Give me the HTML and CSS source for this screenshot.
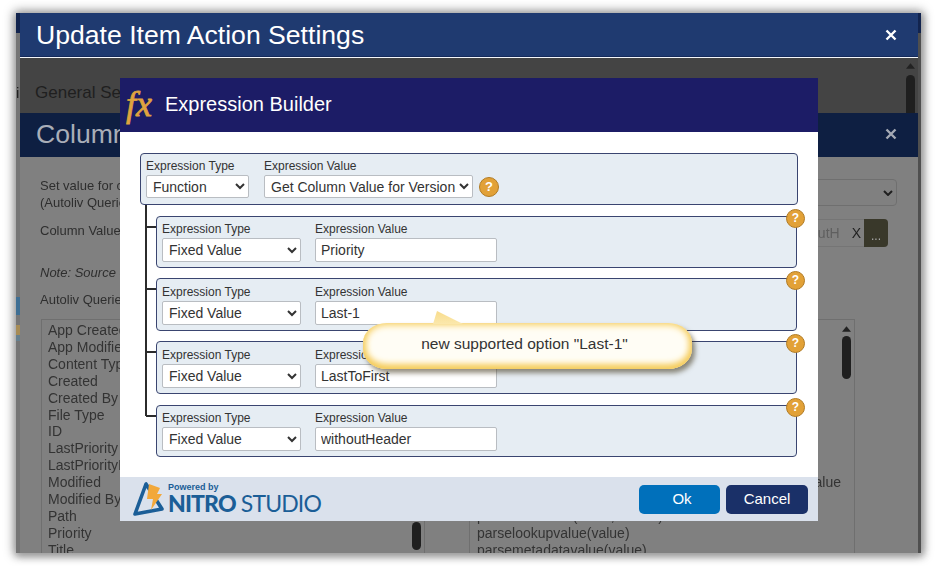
FILE: index.html
```html
<!DOCTYPE html>
<html lang="en">
<head>
<meta charset="utf-8">
<title>Expression Builder</title>
<link rel="stylesheet" href="styles.css">
</head>
<body>
<div class="shot">
  <div class="strip strip-left"></div>
  <main class="page">
    <header class="page-head">
      <h1>Update Item Action Settings</h1>
      <svg class="close" viewBox="0 0 12 12"><path d="M1.5 1.5 10.5 10.5M10.5 1.5 1.5 10.5"/></svg>
    </header>
    <section class="tabs">
      <span class="tab-cut">i</span>
      <span class="tab">General Settings</span>
      <div class="scroll-top">
        <svg class="arrow" viewBox="0 0 10 6"><path d="M5 0 10 6H0Z"/></svg>
        <div class="thumb"></div>
      </div>
    </section>
    <header class="column-head">
      <h2>Column Values</h2>
      <svg class="close dim" viewBox="0 0 12 12"><path d="M1.5 1.5 10.5 10.5M10.5 1.5 1.5 10.5"/></svg>
    </header>
    <section class="form">
      <div class="row row-set">
        <div class="row-label">Set value for column<br>(Autoliv Queries)</div>
        <div class="fake-select"><svg class="chev" viewBox="0 0 10 6"><path d="M1 1 5 5 9 1"/></svg></div>
      </div>
      <div class="row row-value">
        <div class="row-label">Column Value</div>
        <div class="fake-input"><span class="fake-text">withoutH</span><span class="fake-x">X</span><span class="fake-btn">...</span></div>
      </div>
      <div class="note">Note: Source column</div>
      <div class="row-label list-label">Autoliv Queries</div>
      <div class="lists">
        <div class="list">
          <div>App Created</div><div>App Modified</div><div>Content Type</div><div>Created</div><div>Created By</div><div>File Type</div><div>ID</div><div>LastPriority</div><div>LastPriorityId</div><div>Modified</div><div>Modified By</div><div>Path</div><div>Priority</div><div>Title</div>
          <div class="list-scroll"><div class="thumb thumb-left"></div></div>
        </div>
        <div class="list list-right">
          <div class="fn-end">value</div>
          <div>&nbsp;</div>
          <div>parsedatevalue(value, format)</div>
          <div>parselookupvalue(value)</div>
          <div>parsemetadatavalue(value)</div>
          <div class="list-scroll"><svg class="arrow" viewBox="0 0 10 6"><path d="M5 0 10 6H0Z"/></svg><div class="thumb thumb-right"></div></div>
        </div>
      </div>
    </section>
  </main>
  <div class="strip strip-right"></div>

  <div class="modal">
    <header class="modal-head">
      <span class="fx">fx</span>
      <span class="modal-title">Expression Builder</span>
    </header>
    <div class="modal-body">
      <div class="expr expr-root">
        <div class="field">
          <label>Expression Type</label>
          <select class="sel-fn"><option>Function</option></select>
        </div>
        <div class="field">
          <label>Expression Value</label>
          <select class="sel-ver"><option>Get Column Value for Version</option></select>
        </div>
        <span class="help help-root">?</span>
      </div>
      <div class="tree">
        <div class="expr expr-child">
          <div class="field"><label>Expression Type</label><select class="sel-type"><option>Fixed Value</option></select></div>
          <div class="field"><label>Expression Value</label><input class="val" value="Priority"></div>
          <span class="help help-child">?</span>
        </div>
        <div class="expr expr-child">
          <div class="field"><label>Expression Type</label><select class="sel-type"><option>Fixed Value</option></select></div>
          <div class="field"><label>Expression Value</label><input class="val" value="Last-1"></div>
          <span class="help help-child">?</span>
        </div>
        <div class="expr expr-child">
          <div class="field"><label>Expression Type</label><select class="sel-type"><option>Fixed Value</option></select></div>
          <div class="field"><label>Expression Value</label><input class="val" value="LastToFirst"></div>
          <span class="help help-child">?</span>
        </div>
        <div class="expr expr-child">
          <div class="field"><label>Expression Type</label><select class="sel-type"><option>Fixed Value</option></select></div>
          <div class="field"><label>Expression Value</label><input class="val" value="withoutHeader"></div>
          <span class="help help-child">?</span>
        </div>
      </div>
    </div>
    <footer class="modal-foot">
      <div class="logo">
        <svg class="logo-mark" viewBox="0 0 32 36">
          <path class="logo-tri" d="M13 3 2 33 29 28 13 3Z"/>
          <path class="logo-bolt" d="M16 3 27 7 24 13 29 13 18 29 20 18 14 18Z"/>
        </svg>
        <div class="logo-text">
          <span class="logo-small">Powered by</span>
          <span class="logo-big"><b>NITRO</b> STUDIO</span>
        </div>
      </div>
      <div class="actions">
        <button class="btn btn-ok">Ok</button>
        <button class="btn btn-cancel">Cancel</button>
      </div>
    </footer>
  </div>

  <div class="callout">
    <svg class="callout-tip" viewBox="0 0 32 14"><defs><linearGradient id="tip" x1="0" y1="0" x2="0" y2="1"><stop offset="0" stop-color="#f8dc8c"/><stop offset="1" stop-color="#fbe8ac"/></linearGradient></defs><path d="M1 14 5 1 31 14Z" fill="url(#tip)"/></svg>
    new supported option "Last-1"
  </div>
</div>
</body>
</html>
```
FILE: styles.css
```css
* { box-sizing: border-box; }
html, body { margin: 0; height: 100%; background: #fff; overflow: hidden; }
body { font-family: "Liberation Sans", Arial, sans-serif; padding: 13px 0 0 16px; }

.shot {
  position: relative;
  width: 905px;
  height: 540px;
  display: flex;
  background: #808080;
  box-shadow: 0 0 10px 2px #9a9a9a, 1px 2px 7px 1px #a5a5a5;
  filter: blur(0.4px);
}
.strip { flex: none; }
.strip-left {
  width: 4px;
  background: linear-gradient(to bottom, #12244e 0 20px, #757575 20px 284px, #3f6f94 284px 302px, #777 302px 312px, #a78c56 312px 322px, #66808f 322px 328px, #757575 328px);
}
.strip-right {
  width: 3px;
  background: linear-gradient(to bottom, #12244e 0 20px, #4f4f4f 20px);
}
.page { flex: none; width: 898px; display: flex; flex-direction: column; }

.page-head {
  height: 45px;
  flex: none;
  display: flex;
  align-items: center;
  justify-content: space-between;
  padding: 0 21px 0 16px;
  background: #1f3a70;
  border-bottom: 1px solid #f4f6f9;
  box-shadow: inset 0 -1px 0 #14295a;
}
.page-head h1 { margin: 0; font-size: 26.6px; font-weight: 400; color: #fff; }
.close { width: 12px; height: 12px; fill: none; stroke: #fff; stroke-width: 2.4; }
.close.dim { stroke: #a4a9b4; }

.tabs {
  height: 55px;
  flex: none;
  display: flex;
  align-items: center;
  background: #444;
  padding-left: 15px;
  position: relative;
  color: #222;
}
.tab { font-size: 17px; color: #1f1f1f; margin-top: 14px; }
.tab-cut { position: absolute; left: -4px; top: 26px; font-size: 15px; }
.scroll-top {
  margin-left: auto;
  margin-right: 3px;
  width: 9px;
  align-self: stretch;
  display: flex;
  flex-direction: column;
  align-items: center;
  padding-top: 5px;
  gap: 6px;
}
.arrow { width: 9px; height: 6px; fill: #222; flex: none; }
.thumb { width: 9px; background: #1f1f1f; border-radius: 5px; }
.scroll-top .thumb { flex: 1; border-radius: 5px 5px 0 0; }

.column-head {
  height: 44px;
  flex: none;
  display: flex;
  align-items: center;
  justify-content: space-between;
  padding: 0 21px 2px 16px;
  background: #0e1f42;
}
.column-head h2 { margin: 0; font-size: 26.6px; font-weight: 400; color: #a9aeb8; }

.form { flex: 1; min-height: 0; overflow: hidden; padding: 20px 0 0 20px; color: #2e2e2e; font-size: 13px; }
.row { display: flex; align-items: flex-start; }
.row-label { line-height: 17px; width: 190px; flex: none; }
.fake-select {
  margin-left: auto;
  margin-right: 21px;
  margin-top: 2px;
  width: 600px;
  height: 27px;
  border: 1px solid #6f6f6f;
  border-radius: 4px;
  display: flex;
  align-items: center;
  justify-content: flex-end;
  padding-right: 3px;
}
.chev { width: 10px; height: 6px; fill: none; stroke: #1f1f1f; stroke-width: 2; }
.row-value { margin-top: 8px; }
.row-value .row-label { padding-top: 3px; }
.fake-input {
  margin-left: auto;
  margin-right: 30px;
  width: 600px;
  height: 28px;
  border: 1px solid #757575;
  border-right: 0;
  border-radius: 4px;
  display: flex;
  align-items: center;
  justify-content: flex-end;
  font-size: 14px;
}
.fake-text { color: #5f5f5f; margin-right: 12px; }
.fake-x { color: #222; margin-right: 3px; }
.fake-btn {
  width: 24px;
  height: 28px;
  background: #39382a;
  color: #aaa;
  border-radius: 0 4px 4px 0;
  text-align: center;
  font-size: 12px;
  line-height: 34px;
}
.note { font-style: italic; margin-top: 17px; line-height: 17px; }
.list-label { margin-top: 10px; }
.lists { display: flex; margin: 11px 0 0 1px; gap: 44px; }
.list {
  position: relative;
  width: 384px;
  height: 260px;
  flex: none;
  border: 1px solid #6f6f6f;
  padding: 2px 0 0 6px;
  font-size: 14px;
  line-height: 16.9px;
  color: #333;
}
.list-right { width: 386px; padding-top: 154px; padding-left: 7px; }
.fn-end { width: 364px; text-align: right; overflow: hidden; white-space: nowrap; }
.list-scroll {
  position: absolute;
  top: 2px;
  right: 3px;
  width: 9px;
  display: flex;
  flex-direction: column;
  align-items: center;
  gap: 4px;
}
.thumb-left { margin-top: 200px; height: 28px; }
.list-right .list-scroll { top: 6px; }
.thumb-right { height: 43px; }

.modal {
  position: absolute;
  left: 104px;
  top: 65px;
  width: 698px;
  height: 443px;
  display: flex;
  flex-direction: column;
  background: #fff;
}
.modal-head {
  height: 54px;
  flex: none;
  display: flex;
  align-items: center;
  background: #1c1c66;
  color: #fff;
  padding: 0 0 2px 6px;
}
.fx {
  font-family: "Liberation Serif", "Times New Roman", serif;
  font-style: italic;
  font-weight: 400;
  font-size: 36px;
  -webkit-text-stroke: 0.8px #dfa33f;
  color: #dfa33f;
  width: 39px;
  margin-top: -1px;
}
.modal-title { font-size: 20px; }
.modal-body { flex: 1; padding: 21px 20px 0; }
.expr {
  position: relative;
  display: flex;
  gap: 15px;
  background: #e6edf3;
  border: 1.5px solid #3a4570;
  border-radius: 4px;
  padding: 5px 4px 0 5px;
  height: 52px;
}
.expr-root { width: 658px; }
.tree { position: relative; margin: 11px 0 0 16px; display: flex; flex-direction: column; gap: 10px; }
.tree::before {
  content: "";
  position: absolute;
  left: -11px;
  top: -11px;
  height: 211px;
  border-left: 2px solid #2b2b2b;
}
.expr-child { width: 641px; padding-left: 5px; padding-top: 6px; gap: 14px; }
.expr-child:nth-child(1), .expr-child:nth-child(4) { padding-top: 5px; }
.expr-child:nth-child(2), .expr-child:nth-child(3) { height: 53px; }
.expr-child:nth-child(4) { margin-top: 1px; }
.expr-child::before {
  content: "";
  position: absolute;
  left: -11px;
  top: 9px;
  width: 10px;
  border-top: 2px solid #2b2b2b;
}
.field { display: flex; flex-direction: column; }
.field label { font-size: 12px; line-height: 14px; color: #333; margin-bottom: 2px; }
select, input {
  font-family: "Liberation Sans", Arial, sans-serif;
  font-size: 14px;
  color: #333;
  background: #fff;
  border: 1px solid #b9bdc2;
  border-radius: 2px;
  outline: 0;
  margin: 0;
}
select { padding: 0 0 0 2px; }
.sel-fn { width: 103px; height: 23px; }
.sel-ver { width: 209px; height: 23px; }
.sel-type { width: 139px; height: 24px; }
.val { width: 182px; height: 24px; padding: 0 5px; }
.help {
  border-radius: 50%;
  background: #e2a137;
  border: 1px solid #b27c24;
  color: #fff;
  font-weight: 700;
  text-align: center;
  flex: none;
}
.help-root { width: 20px; height: 20px; font-size: 13px; line-height: 18px; margin: 18px 0 0 -9px; }
.help-child { position: absolute; right: -9px; top: -8px; width: 19px; height: 19px; font-size: 12px; line-height: 17px; }

.modal-foot {
  height: 44px;
  flex: none;
  display: flex;
  align-items: center;
  justify-content: space-between;
  background: #dae1ec;
  padding: 0 10px 0 13px;
}
.logo { display: flex; align-items: center; gap: 3px; }
.logo-mark { width: 32px; height: 36px; flex: none; }
.logo-tri { fill: none; stroke: #1b5e97; stroke-width: 3.6; stroke-linejoin: round; }
.logo-bolt { fill: #f2a83a; }
.logo-text { display: flex; flex-direction: column; color: #1b5e97; margin-top: -2px; }
.logo-small { font-size: 9px; font-weight: 700; line-height: 10px; }
.logo-big { font-family: "Lato", "Liberation Sans", sans-serif; font-size: 23px; line-height: 23px; letter-spacing: -0.85px; white-space: nowrap; }
.logo-big b { font-weight: 900; }
.actions { display: flex; gap: 6px; margin-top: 1px; }
.btn {
  width: 82px;
  height: 29px;
  border: 0;
  border-radius: 5px;
  color: #fff;
  font-family: "Liberation Sans", Arial, sans-serif;
  font-size: 15px;
  padding: 0 0 2px;
}
.btn-ok { width: 81px; background: #0070bb; padding-left: 5px; }
.btn-cancel { background: #1a3068; }

.callout {
  position: absolute;
  left: 347px;
  top: 310px;
  width: 329px;
  height: 46px;
  border-radius: 24px / 20px;
  background: #fffdf5;
  box-shadow: inset 0 -3px 7px 1px #f5cb5a, inset 0 0 7px 2px #f8d777, 3px 4px 5px rgba(60, 50, 20, .55);
  color: #333;
  font-size: 15.5px;
  line-height: 42px;
  text-align: center;
  padding-right: 6px;
}
.callout-tip { position: absolute; left: 69px; top: -13px; width: 32px; height: 14px; }
```
